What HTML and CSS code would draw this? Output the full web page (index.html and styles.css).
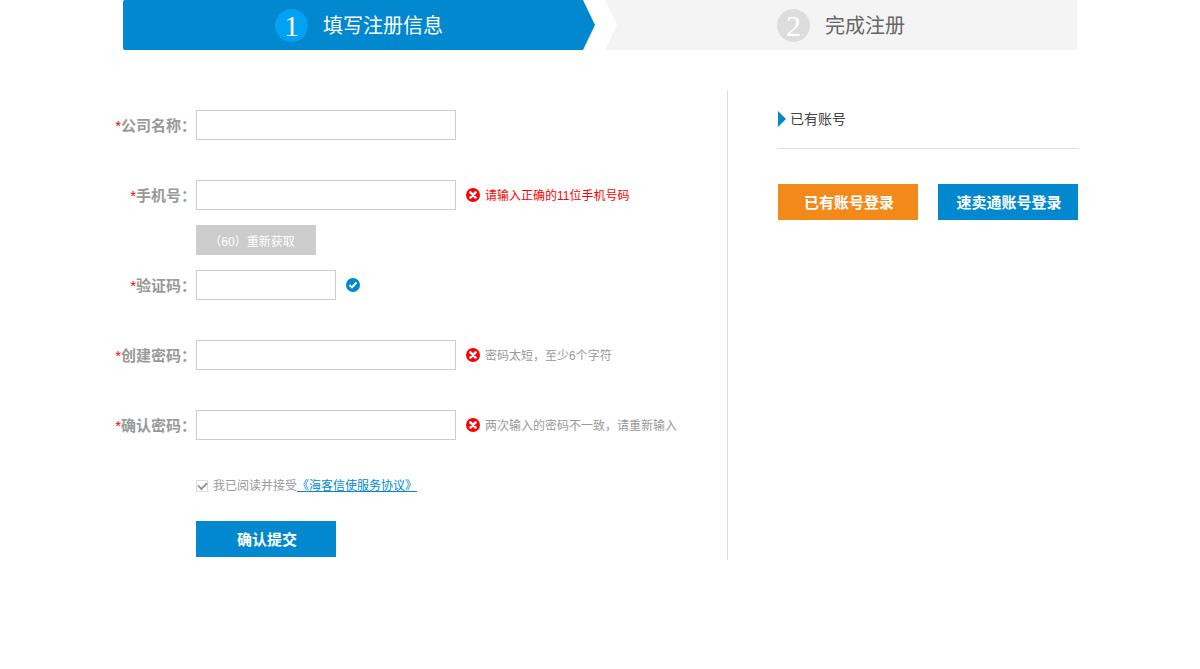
FILE: index.html
```html
<!DOCTYPE html>
<html lang="zh-CN">
<head>
<meta charset="utf-8">
<meta name="viewport" content="width=device-width, initial-scale=1">
<title>填写注册信息</title>
<link rel="stylesheet" href="styles.css">
</head>
<body>
<svg class="sprite" aria-hidden="true">
  <symbol id="icon-error" viewBox="0 0 14 14">
    <circle cx="7" cy="7" r="7" fill="#fe0000"/>
    <path d="M4.4 4.4l5.2 5.2M9.6 4.4L4.4 9.6" stroke="#fff" stroke-width="2.6" stroke-linecap="round"/>
  </symbol>
  <symbol id="icon-ok" viewBox="0 0 14 14">
    <circle cx="7" cy="7" r="7" fill="#0188ce"/>
    <path d="M3.4 7.1l2.5 2.3 4.6-4.9" fill="none" stroke="#fff" stroke-width="2"/>
  </symbol>
</svg>

<ol class="steps">
  <li class="step step-current" aria-current="step"><span class="step-number">1</span><span class="step-text">填写注册信息</span></li>
  <li class="step step-next"><span class="step-number">2</span><span class="step-text">完成注册</span></li>
</ol>

<main class="content">
  <form class="register">
    <div class="row">
      <label class="label" for="company"><span class="required">*</span>公司名称：</label>
      <input class="field" id="company" type="text">
    </div>
    <div class="row row-phone">
      <label class="label" for="phone"><span class="required">*</span>手机号：</label>
      <input class="field" id="phone" type="tel" aria-describedby="phone-hint">
      <p class="hint hint-alert" id="phone-hint"><svg class="icon"><use href="#icon-error"/></svg><span class="hint-text">请输入正确的11位手机号码</span></p>
    </div>
    <button class="resend" type="button">（60）重新获取</button>
    <div class="row">
      <label class="label" for="code"><span class="required">*</span>验证码：</label>
      <input class="field field-short" id="code" type="text">
      <p class="hint"><svg class="icon" role="img" aria-label="正确"><use href="#icon-ok"/></svg></p>
    </div>
    <div class="row">
      <label class="label" for="password"><span class="required">*</span>创建密码：</label>
      <input class="field" id="password" type="password" aria-describedby="password-hint">
      <p class="hint" id="password-hint"><svg class="icon"><use href="#icon-error"/></svg><span class="hint-text">密码太短，至少6个字符</span></p>
    </div>
    <div class="row row-last">
      <label class="label" for="confirm"><span class="required">*</span>确认密码：</label>
      <input class="field" id="confirm" type="password" aria-describedby="confirm-hint">
      <p class="hint" id="confirm-hint"><svg class="icon"><use href="#icon-error"/></svg><span class="hint-text">两次输入的密码不一致，请重新输入</span></p>
    </div>
    <div class="agreement">
      <input class="checkbox" id="agree" type="checkbox" checked>
      <label for="agree">我已阅读并接受</label><a class="terms" href="#">《海客信使服务协议》</a>
    </div>
    <button class="button" type="submit">确认提交</button>
  </form>

  <aside class="account">
    <h2 class="account-title">已有账号</h2>
    <div class="account-actions">
      <a class="button button-orange" href="#">已有账号登录</a>
      <a class="button" href="#">速卖通账号登录</a>
    </div>
  </aside>
</main>
</body>
</html>
```

FILE: styles.css
```css
* {
  box-sizing: border-box;
}

body {
  margin: 0;
  background: #fff;
  color: #999;
  font: 12px/20px "Liberation Sans", "Noto Sans CJK SC", sans-serif;
}

input,
button {
  font: inherit;
}

.sprite {
  display: none;
}

/* Progress steps */

.steps {
  display: grid;
  grid-template-columns: 1fr 1fr;
  gap: 10px;
  max-width: 954px;
  margin: 0 auto 40px;
  padding: 0;
  list-style: none;
}

.step {
  display: flex;
  align-items: center;
  justify-content: center;
  gap: 15px;
  height: 50px;
  font-size: 20px;
}

.step-current {
  border-radius: 2px 0 0 2px;
  background: #0188ce;
  color: #fff;
  clip-path: polygon(0 0, calc(100% - 12px) 0, 100% 50%, calc(100% - 12px) 100%, 0 100%);
}

.step-next {
  border-radius: 0 2px 2px 0;
  background: #f4f4f4;
  color: #666;
  clip-path: polygon(0 0, 100% 0, 100% 100%, 0 100%, 12px 50%);
}

.step-number {
  width: 33px;
  height: 33px;
  border-radius: 50%;
  background: #ddd;
  color: #fff;
  font: 30px/33px "Liberation Serif", serif;
  text-align: center;
}

.step-text {
  padding-top: 2px;
}

.step-current .step-number {
  background: #01a1f4;
}

/* Two-column content */

.content {
  display: grid;
  grid-template-columns: minmax(0, 613px) 300px;
  gap: 50px;
  max-width: 970px;
  margin: 0 auto;
}

.register {
  padding: 20px 0 3px;
  border-right: 1px solid #ddd;
}

.row {
  display: flex;
  align-items: center;
  margin-bottom: 40px;
}

.row-phone {
  margin-bottom: 15px;
}

.row-last {
  margin-bottom: 36px;
}

.label {
  flex: none;
  width: 81px;
  padding-top: 2px;
  font-size: 15px;
  font-weight: bold;
  text-align: right;
  white-space: nowrap;
}

.required {
  color: #f00;
  font-weight: normal;
}

.field {
  width: 260px;
  height: 30px;
  padding: 0 8px;
  border: 1px solid #ccc;
  border-radius: 0;
  background: #fff;
  color: #333;
}

.field-short {
  width: 140px;
}

.hint {
  display: flex;
  align-items: center;
  gap: 5px;
  margin: 0 0 0 10px;
}

.hint-text {
  padding-top: 2px;
}

.hint-alert {
  color: #f00;
}

.icon {
  width: 14px;
  height: 14px;
}

.resend {
  display: block;
  width: 120px;
  height: 30px;
  margin: 0 0 15px 81px;
  padding: 3px 8px 0 0;
  border: 0;
  background: #ccc;
  color: #fff;
}

.agreement {
  display: flex;
  align-items: center;
  margin: 0 0 25px 81px;
}

.checkbox {
  display: grid;
  place-items: center;
  width: 12px;
  height: 12px;
  margin: 0 5px 0 0;
  border: 1px solid #ddd;
  background: #fff;
  appearance: none;
}

.checkbox:checked::before {
  width: 7px;
  height: 4px;
  margin-bottom: 2px;
  border: solid #999;
  border-width: 0 0 2px 2px;
  content: "";
  transform: rotate(-45deg);
}

.terms {
  color: #0188ce;
}

.button {
  display: block;
  width: 140px;
  height: 36px;
  padding: 2px 0 0 2px;
  border: 0;
  background: #0188ce;
  color: #fff;
  font-size: 15px;
  font-weight: bold;
  line-height: 34px;
  text-align: center;
  text-decoration: none;
}

.register .button {
  margin-left: 81px;
}

.button-orange {
  background: #f28a1b;
}

/* Existing account */

.account-title {
  display: flex;
  align-items: center;
  gap: 4px;
  margin: 0 0 35px;
  padding: 19px 0;
  border-bottom: 1px solid #ddd;
  color: #444;
  font-size: 14px;
  font-weight: normal;
}

.account-title::before {
  border: solid transparent;
  border-width: 8px 0 8px 8px;
  border-left-color: #0188ce;
  content: "";
}

.account-actions {
  display: flex;
  gap: 20px;
}
```
